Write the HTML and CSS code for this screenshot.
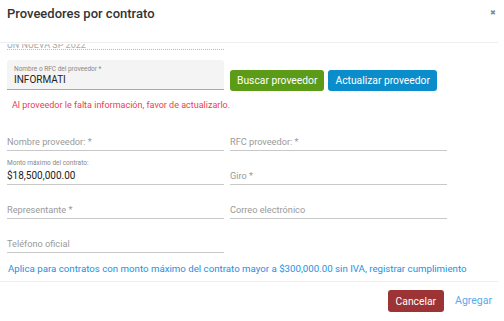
FILE: index.html
```html
<!DOCTYPE html>
<html lang="es">
<head>
  <meta charset="UTF-8">
  <meta name="viewport" content="width=device-width, initial-scale=1.0">
  <title>Proveedores por contrato</title>
  <link rel="stylesheet" href="styles.css">
</head>
<body>

  <div class="modal">
    <!-- Header -->
    <div class="modal-header">
      <h2>Proveedores por contrato</h2>
      <span class="close">&#10006;</span>
    </div>

    <!-- Body (scrolled a bit) -->
    <div class="modal-body">
      <div class="clipped">
        <div class="field-disabled">UN NUEVA SP 2022</div>
      </div>

      <div class="search-row">
        <div class="filled-input">
          <label>Nombre o RFC del proveedor *</label>
          <div class="value">INFORMATI</div>
        </div>
        <button class="btn btn-green">Buscar proveedor</button>
        <button class="btn btn-blue">Actualizar proveedor</button>
      </div>

      <p class="error">Al proveedor le falta información, favor de actualizarlo.</p>

      <div class="grid">
        <div class="line-input"><span class="placeholder">Nombre proveedor: *</span></div>
        <div class="line-input"><span class="placeholder">RFC proveedor: *</span></div>

        <div class="line-input">
          <label>Monto máximo del contrato:</label>
          <span class="value">$18,500,000.00</span>
        </div>
        <div class="line-input"><span class="placeholder">Giro *</span></div>

        <div class="line-input"><span class="placeholder">Representante *</span></div>
        <div class="line-input"><span class="placeholder">Correo electrónico</span></div>

        <div class="line-input"><span class="placeholder">Teléfono oficial</span></div>
      </div>

      <p class="note">Aplica para contratos con monto máximo del contrato mayor a $300,000.00 sin IVA, registrar cumplimiento</p>
    </div>

    <!-- Footer -->
    <div class="modal-footer">
      <button class="btn btn-red">Cancelar</button>
      <button class="btn-link">Agregar</button>
    </div>
  </div>

</body>
</html>
```

FILE: styles.css
```css
/* Global */
body {
  margin: 0;
  padding: 0;
  font-family: Roboto, "Liberation Sans", sans-serif;
  background: #ffffff;
  color: #333333;
  width: 504px;
  height: 321px;
  overflow: hidden;
}

.modal {
  width: 498px;
  display: flex;
  flex-direction: column;
}

/* Header */
.modal-header {
  display: flex;
  justify-content: space-between;
  align-items: flex-start;
  height: 42px;
  box-sizing: border-box;
  padding: 5px 6px 0 7px;
}

.modal-header h2 {
  margin: 0;
  font-size: 13px;
  font-weight: 500;
  color: #333333;
  line-height: 17px;
}

.close {
  font-size: 7px;
  color: #888888;
  margin-top: 4px;
  margin-right: -4px;
}

/* Body */
.modal-body {
  border-top: 1px solid #eeeeee;
  padding: 0 7px;
}

.clipped {
  height: 5px;
  overflow: hidden;
  width: 217px;
  display: flex;
  align-items: flex-end;
  border-bottom: 1px dotted #bbbbbb;
  margin-top: 1px;
}

.field-disabled {
  font-size: 9px;
  color: #aaaaaa;
  line-height: 10px;
  margin-bottom: -1px;
}

.search-row {
  display: flex;
  align-items: flex-end;
  margin-top: 10px;
}

.filled-input {
  width: 217px;
  height: 30px;
  box-sizing: border-box;
  background: #f4f4f4;
  border-bottom: 1px solid #aaaaaa;
  border-radius: 3px 3px 0 0;
  padding: 5px 7px 0;
  margin-right: 6px;
}

.filled-input label {
  display: block;
  font-size: 6.5px;
  color: #888888;
  line-height: 8px;
}

.filled-input .value {
  font-size: 10px;
  color: #222222;
  line-height: 13px;
}

.btn {
  font-family: Roboto, "Liberation Sans", sans-serif;
  font-size: 10.3px;
  color: #ffffff;
  border: none;
  border-radius: 3px;
  height: 21px;
  padding: 0 7px;
  margin-bottom: -1px;
  cursor: pointer;
}

.btn-green {
  background: #5b9b17;
  margin-right: 4px;
}

.btn-blue {
  background: #0c8dcb;
}

.error {
  margin: 10px 0 0 5px;
  font-size: 9px;
  color: #ec3d4f;
}

/* Underlined fields */
.grid {
  display: grid;
  grid-template-columns: 217px 217px;
  column-gap: 6px;
  row-gap: 0;
  margin-top: 7px;
}

.line-input {
  height: 34px;
  box-sizing: border-box;
  border-bottom: 1px solid #c8c8c8;
  display: flex;
  flex-direction: column;
  justify-content: flex-end;
  padding-bottom: 3px;
}

.line-input .placeholder {
  font-size: 9.2px;
  color: #9a9a9a;
}

.line-input label {
  font-size: 6.5px;
  color: #888888;
  margin-bottom: 3px;
}

.line-input .value {
  font-size: 10px;
  color: #222222;
}

.note {
  margin: 10px 0 0 1px;
  font-size: 9.7px;
  color: #1e90e2;
}

/* Footer */
.modal-footer {
  margin-top: 7px;
  border-top: 1px solid #eeeeee;
  display: flex;
  justify-content: flex-end;
  align-items: center;
  padding: 8px 6px 0 0;
}

.btn-red {
  background: #9c3436;
  height: 22px;
  padding: 0 8px;
  font-size: 10.3px;
}

.btn-link {
  font-family: Roboto, "Liberation Sans", sans-serif;
  background: none;
  border: none;
  color: #5caae8;
  font-size: 10.5px;
  margin-left: 11px;
  padding: 0;
  cursor: pointer;
}
```
